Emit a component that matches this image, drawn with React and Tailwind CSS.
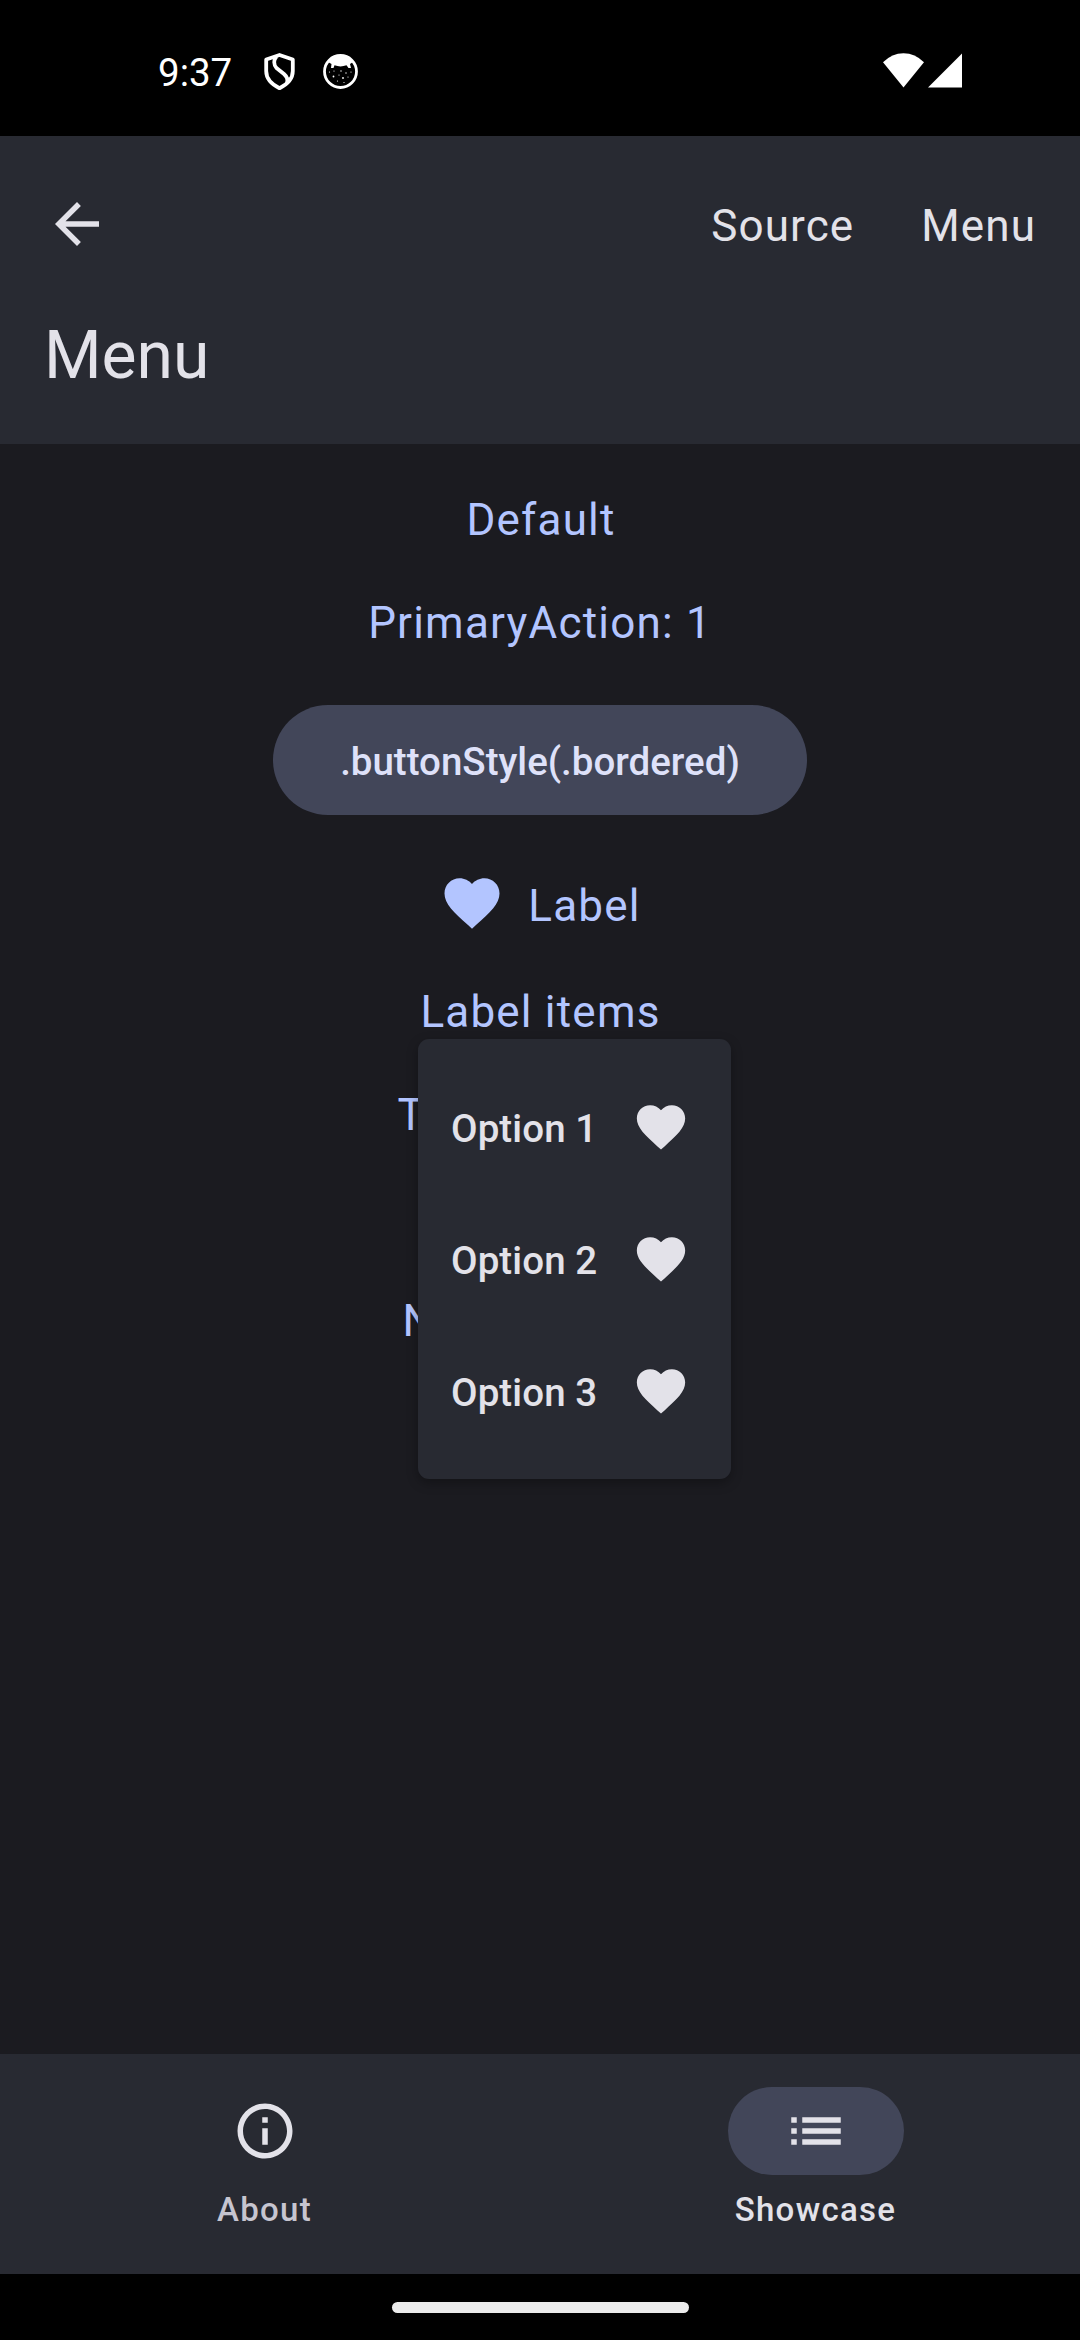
import React from "react";

function Icon({ d, className }) {
  return (
    <svg viewBox="0 0 24 24" className={className} fill="currentColor" aria-hidden="true">
      <path d={d} />
    </svg>
  );
}

const HEART =
  "M12 21.35l-1.45-1.32C5.4 15.36 2 12.28 2 8.5 2 5.42 4.42 3 7.5 3c1.74 0 3.41.81 4.5 2.09C13.09 3.81 14.76 3 16.5 3 19.58 3 22 5.42 22 8.5c0 3.78-3.4 6.86-8.55 11.54L12 21.35z";
const BACK = "M20 11H7.83l5.59-5.59L12 4l-8 8 8 8 1.41-1.41L7.83 13H20v-2z";
const INFO =
  "M11 7h2v2h-2zm0 4h2v6h-2zm1-9C6.48 2 2 6.48 2 12s4.48 10 10 10 10-4.48 10-10S17.52 2 12 2zm0 18c-4.41 0-8-3.59-8-8s3.59-8 8-8 8 3.59 8 8-3.59 8-8 8z";
const LIST =
  "M3 13h2v-2H3v2zm0 4h2v-2H3v2zm0-8h2V7H3v2zm4 4h14v-2H7v2zm0 4h14v-2H7v2zM7 7v2h14V7H7z";

function StatusBar() {
  return (
    <div className="flex h-[136px] items-start justify-between bg-black pr-[118px] pl-[158px] text-white">
      <div className="flex items-start">
        <span className="mt-[50px] w-[105px] text-[38.5px] leading-[46px]">9:37</span>
        <svg className="mt-[52px] h-[39px] w-[33px]" viewBox="0 0 33 39" fill="none" stroke="#fff" strokeWidth="3.8" strokeLinejoin="round" aria-hidden="true">
          <path d="M16.500 3 29.800 7.500V19C29.800 27 25 32 16.500 36.200 8 32 3.200 27 3.200 19V7.500Z" />
          <path d="M13.500 4.500C10.500 8 10.500 12.500 13.500 16L21 22C25 25.500 25 28 24 31" />
        </svg>
        <svg className="mt-[53px] ml-[26px] h-[37px] w-[37px]" viewBox="0 0 37 37" aria-hidden="true">
          <circle cx="18.500" cy="18.500" r="16" fill="none" stroke="#fff" strokeWidth="2.800" />
          <path d="M6 9Q11 2 18.500 2T31 9L28 11 29 15H26.500L24.500 12.300Q18.500 14.500 12.500 12.300L11.500 15H9L9.500 11Z" fill="#fff" />
          <g fill="#fff">
            <circle cx="7.500" cy="19" r=".6" />
            <circle cx="12" cy="18" r=".6" />
            <circle cx="19" cy="18" r=".7" />
            <circle cx="24" cy="20" r=".7" />
            <circle cx="29" cy="19" r=".6" />
            <circle cx="11.500" cy="23.500" r=".9" />
            <circle cx="17" cy="22" r=".6" />
            <circle cx="21" cy="25" r=".9" />
            <circle cx="26" cy="24" r=".6" />
            <circle cx="15.500" cy="28" r=".6" />
            <circle cx="22" cy="29.500" r=".6" />
          </g>
        </svg>
      </div>
      <div className="mt-[53px] flex gap-[4px]">
        <svg className="h-[35px] w-[41px]" viewBox="0 0 41 35" fill="#fff" aria-hidden="true">
          <path d="M0 9.300Q9 .3 20.500 .3T41 9.300L20.500 34.500Z" />
        </svg>
        <svg className="h-[35px] w-[34px]" viewBox="0 0 34 35" fill="#fff" aria-hidden="true">
          <path d="M34 .5V34.600H0Z" />
        </svg>
      </div>
    </div>
  );
}

function AppBar() {
  return (
    <header className="h-[308px] bg-[#282a32] text-[#e3e2e9]">
      <div className="flex h-[176px] items-center justify-between pr-[44px] pl-[44px]">
        <Icon d={BACK} className="h-[66px] w-[66px]" />
        <div className="mt-[3px] flex gap-[67px] text-[44px] leading-[66px] tracking-[1.1px]">
          <span>Source</span>
          <span>Menu</span>
        </div>
      </div>
      <h1 className="pl-[44px] text-[66px] leading-[88px]">Menu</h1>
    </header>
  );
}

function PopupMenu() {
  return (
    <div className="absolute top-[595px] left-[418px] flex w-[313px] flex-col rounded-[11px] bg-[#282a32] py-[22px] text-[#e3e2e9] shadow-[0_4px_12px_rgba(0,0,0,0.3)]">
      {["Option 1", "Option 2", "Option 3"].map((label) => (
        <div key={label} className="flex h-[132px] items-center justify-between pr-[41px] pl-[33px]">
          <span className="mt-[3px] text-[38.5px] leading-[55px] font-medium tracking-[0.1px]">{label}</span>
          <Icon d={HEART} className="h-[58px] w-[58px]" />
        </div>
      ))}
    </div>
  );
}

function Content() {
  return (
    <main className="relative flex h-[1610px] flex-col items-center bg-[#1b1b20] pt-[43px] text-[44px] leading-[66px] tracking-[1.2px] text-[#b3c5ff]">
      <div className="pl-[2px]">Default</div>
      <div className="mt-[37px]">PrimaryAction: 1</div>
      <div className="mt-[49px] flex h-[110px] w-[534px] items-center justify-center rounded-full bg-[#424659] pt-[3px] text-[38.5px] font-medium tracking-[0px] text-[#dee1f9]">
        .buttonStyle(.bordered)
      </div>
      <div className="mt-[55px] flex h-[66px] gap-[23px]">
        <Icon d={HEART} className="h-[66px] w-[66px]" />
        <span className="mt-[3px]">Label</span>
      </div>
      <div className="mt-[43px] pl-[1px]">Label items</div>
      <div className="mt-[37px] w-[285px]">T</div>
      <div className="mt-[140px] w-[275px]">N</div>
      <PopupMenu />
    </main>
  );
}

function NavBar() {
  return (
    <nav className="flex h-[220px] gap-[22px] bg-[#282a32] pt-[33px] text-[33px] leading-[44px] font-medium tracking-[1.3px]">
      <div className="flex flex-1 flex-col items-center text-[#c6c5d0]">
        <div className="flex h-[88px] w-[176px] items-center justify-center text-[#e3e2e9]">
          <Icon d={INFO} className="h-[66px] w-[66px]" />
        </div>
        <span className="mt-[13px]">About</span>
      </div>
      <div className="flex flex-1 flex-col items-center text-[#e3e2e9]">
        <div className="flex h-[88px] w-[176px] items-center justify-center rounded-full bg-[#424659]">
          <Icon d={LIST} className="h-[66px] w-[66px]" />
        </div>
        <span className="mt-[13px]">Showcase</span>
      </div>
    </nav>
  );
}

export default function App() {
  return (
    <div className="h-[2340px] w-[1080px] overflow-hidden bg-black font-['Roboto',sans-serif]">
      <StatusBar />
      <AppBar />
      <Content />
      <NavBar />
      <div className="flex h-[66px] items-center justify-center bg-black">
        <div className="h-[11px] w-[297px] rounded-full bg-[#ececec]" />
      </div>
    </div>
  );
}
